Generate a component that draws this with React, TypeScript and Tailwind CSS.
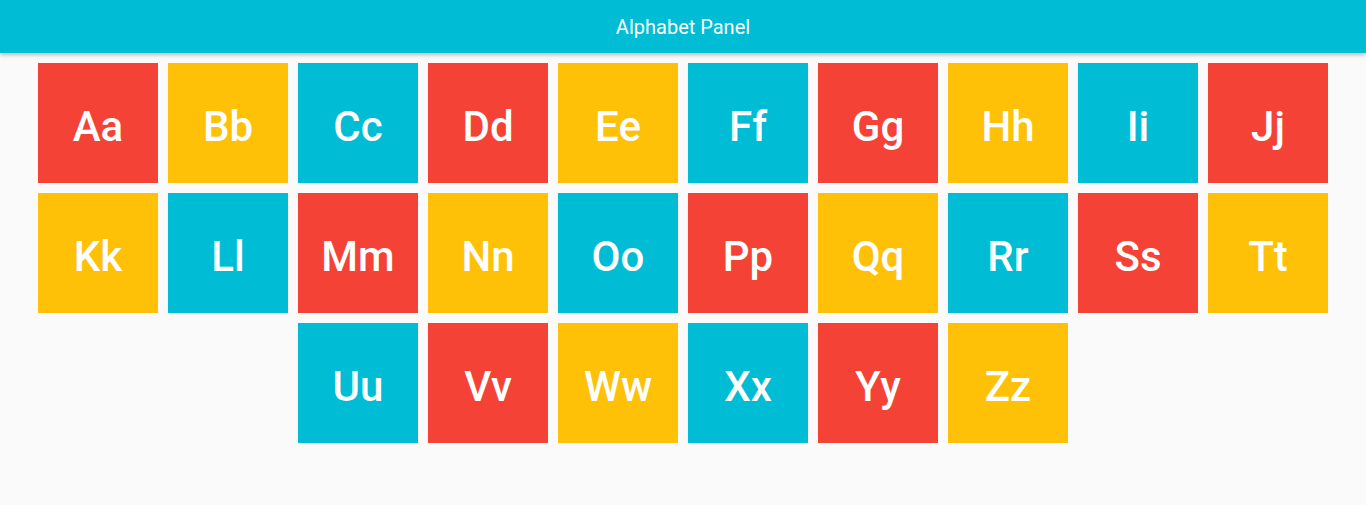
import React from "react";

const letters = "ABCDEFGHIJKLMNOPQRSTUVWXYZ".split("");
const colors = ["bg-[#f44336]", "bg-[#ffc107]", "bg-[#00bcd4]"];

const App = () => {
    return (
        <div className="min-h-screen bg-[#fafafa] font-['Roboto',sans-serif]">
            <header className="h-[53px] bg-[#00bcd4] flex items-center justify-center text-white text-xl shadow-[0_2px_4px_rgba(0,0,0,0.25)] relative">
                Alphabet Panel
            </header>
            <div className="flex flex-wrap justify-center px-[33px] pt-[5px]">
                {letters.map((letter, index) => (
                    <div
                        key={letter}
                        className={`w-[120px] h-[120px] m-[5px] pt-[6px] flex items-center justify-center text-white text-[42px] font-medium ${colors[index % 3]}`}
                    >
                        {letter}
                        {letter.toLowerCase()}
                    </div>
                ))}
            </div>
        </div>
    );
};

export default App;
